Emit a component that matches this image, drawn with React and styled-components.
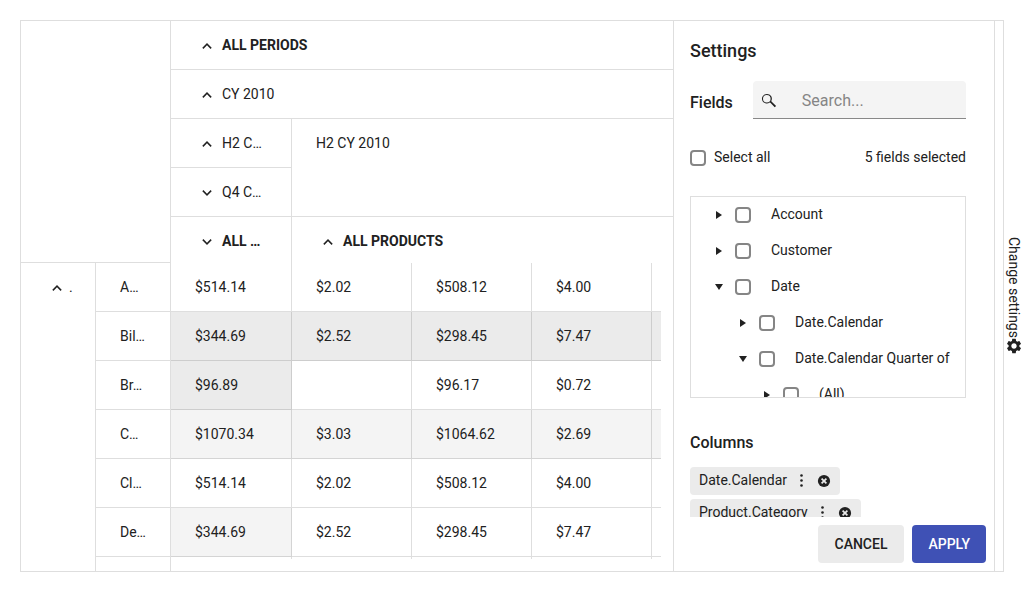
import React from "react";
import styled, { createGlobalStyle } from "styled-components";
import { MdSettings } from "react-icons/md";

const line = "rgba(33, 33, 33, 0.15)";
const ink = "#212121";

const GlobalStyle = createGlobalStyle`
  *, *::before, *::after { box-sizing: border-box; }
  body {
    margin: 0;
    overflow: hidden;
    background: #fff;
    color: ${ink};
    font: 400 14px/20px Roboto, "Liberation Sans", sans-serif;
  }
  button, input { font: inherit; color: inherit; }
`;

const Page = styled.div`
  display: flex;
  height: 100vh;
  padding: 20px 0 20px 20px;
`;

const Widget = styled.main`
  flex: 1;
  min-width: 0;
  display: flex;
  padding-right: 8px;
  border: 1px solid ${line};
`;

/* Pivot grid */

const Pivot = styled.section`
  flex: 1;
  min-width: 0;
  display: grid;
  grid-template-columns: 150px minmax(0, 1fr);
  grid-template-rows: 242px minmax(0, 1fr);
`;

const Corner = styled.div`
  border-right: 1px solid ${line};
  border-bottom: 1px solid ${line};
`;

const Pane = styled.div`
  overflow: hidden;
  margin: ${(p) => (p.$track ? "0 12px 12px 0" : "0")};
`;

const Table = styled.table`
  table-layout: fixed;
  width: ${(p) => p.$width}px;
  border-spacing: 0;
`;

const cell = `
  height: 49px;
  padding: 14px 24px;
  border-right: 1px solid ${line};
  border-bottom: 1px solid ${line};
  text-align: left;
  vertical-align: top;
  white-space: nowrap;
  overflow: hidden;
`;

const tints = { none: "transparent", light: "#f4f4f4", dark: "#ebebeb" };

const HeadCell = styled.th`
  ${cell}
  font-weight: ${(p) => (p.$total ? 700 : 400)};
`;

const DataCell = styled.td`
  ${cell}
  background: ${(p) => tints[p.$tint || "none"]};
`;

const Caption = styled.span`
  display: flex;
  align-items: center;
  gap: ${(p) => (p.$tight ? 0 : 3)}px;
`;

const IconButton = styled.button`
  flex: none;
  display: flex;
  align-items: center;
  justify-content: center;
  width: ${(p) => p.$size}px;
  height: ${(p) => (p.$size > 20 ? 20 : p.$size)}px;
  padding: 0;
  border: 0;
  background: none;
`;

const Icon = styled.svg.attrs({ viewBox: "0 0 16 16", "aria-hidden": true })`
  display: block;
  flex: none;
  width: 16px;
  height: 16px;
  fill: currentColor;
`;

/* Settings panel */

const Settings = styled.aside`
  flex: none;
  display: flex;
  flex-direction: column;
  width: 322px;
  border: solid ${line};
  border-width: 0 1px;
`;

const SettingsBody = styled.div`
  flex: 1;
  min-height: 0;
  overflow: hidden;
  padding: 16px 28px 0 16px;
`;

const Title = styled.h2`
  margin: 0;
  font-size: 18px;
  font-weight: 500;
  line-height: 28px;
`;

const Heading = styled.h3`
  margin: 0;
  font-size: 16px;
  font-weight: 500;
  line-height: 24px;
`;

const SearchRow = styled.div`
  display: flex;
  align-items: flex-end;
  gap: 20px;
  margin-top: 16px;
  ${Heading} { padding-bottom: 4px; }
`;

const SearchBox = styled.label`
  flex: 1;
  min-width: 0;
  display: flex;
  align-items: center;
  gap: 24px;
  height: 38px;
  padding: 2px 8px 0;
  border-bottom: 1px solid #888;
  border-radius: 4px 4px 0 0;
  background: #f4f4f4;
`;

const SearchInput = styled.input`
  flex: 1;
  min-width: 0;
  padding: 0 1px;
  border: 0;
  outline: 0;
  background: none;
  font-size: 16px;
  line-height: 24px;
  &::placeholder { color: #858585; opacity: 1; }
`;

const SelectRow = styled.div`
  display: flex;
  align-items: center;
  justify-content: space-between;
  margin-top: 28px;
`;

const CheckLabel = styled.label`
  display: flex;
  align-items: center;
  gap: ${(p) => p.$gap}px;
`;

const Checkbox = styled.input.attrs({ type: "checkbox" })`
  appearance: none;
  flex: none;
  width: 16px;
  height: 16px;
  margin: 2px 0 0;
  border: 2px solid #858585;
  border-radius: 4px;
  background: #fff;
`;

const Tree = styled.ul`
  height: 202px;
  margin: 29px 0 0;
  padding: 0 0 0 20px;
  overflow: hidden;
  border: 1px solid ${line};
  list-style: none;
`;

const TreeItem = styled.li`
  display: flex;
  align-items: center;
  gap: 8px;
  height: 36px;
  padding-left: ${(p) => p.$level * 24}px;
  white-space: nowrap;
  ${CheckLabel} { padding-bottom: 2px; }
`;

const ColumnsSection = styled.section`
  display: flex;
  flex-direction: column;
  align-items: flex-start;
  gap: 4px;
  margin-top: 33px;
  ${Heading} { margin-bottom: 8px; }
`;

const Chip = styled.div`
  display: flex;
  align-items: center;
  height: 28px;
  padding: 0 8px;
  border-radius: 4px;
  background: #ebebeb;
`;

const ChipText = styled.span`
  padding: 0 6px 2px 1px;
`;

const ChipActions = styled.span`
  display: flex;
  gap: 7px;
`;

const Footer = styled.footer`
  display: flex;
  justify-content: flex-end;
  gap: 8px;
  padding: 8px;
`;

const Action = styled.button`
  height: 38px;
  padding: 0 ${(p) => (p.$primary ? 16 : 17)}px;
  border: 0;
  border-radius: 4px;
  background: ${(p) => (p.$primary ? "#3f51b5" : "#ebebeb")};
  color: ${(p) => (p.$primary ? "#fff" : ink)};
  font-weight: 500;
  text-transform: uppercase;
`;

const SideTab = styled.button`
  flex: none;
  display: flex;
  align-items: center;
  justify-content: center;
  width: 20px;
  padding: 0;
  border: 0;
  background: none;
  line-height: 18px;
  writing-mode: vertical-rl;
  white-space: nowrap;
`;

const Toggle = ({ open }) => (
  <IconButton $size={24} type="button" aria-label={open ? "Collapse" : "Expand"}>
    <Icon>
      <path
        d={
          open
            ? "M8 6 3.300 10.700l1.100 1.200L8 8.300l3.600 3.600 1.100-1.200z"
            : "M8 12 3.300 7.300l1.100-1.200L8 9.700l3.600-3.600 1.100 1.200z"
        }
      />
    </Icon>
  </IconButton>
);

const Header = ({ open, tight, children, ...rest }) => (
  <HeadCell {...rest}>
    <Caption $tight={tight}>
      <Toggle open={open} />
      {children}
    </Caption>
  </HeadCell>
);

const rows = [
  { name: "A…", values: ["$514.14", "$2.02", "$508.12", "$4.00"], tints: [] },
  {
    name: "Bil…",
    values: ["$344.69", "$2.52", "$298.45", "$7.47"],
    tints: ["dark", "dark", "dark", "dark", "dark"],
  },
  { name: "Br…", values: ["$96.89", "", "$96.17", "$0.72"], tints: ["dark"] },
  {
    name: "C…",
    values: ["$1070.34", "$3.03", "$1064.62", "$2.69"],
    tints: ["light", "light", "light", "light", "light"],
  },
  { name: "Cl…", values: ["$514.14", "$2.02", "$508.12", "$4.00"], tints: [] },
  { name: "De…", values: ["$344.69", "$2.52", "$298.45", "$7.47"], tints: ["light"] },
  { name: "", values: ["", "", "", ""], tints: [] },
];

const fields = [
  { name: "Account", level: 0 },
  { name: "Customer", level: 0 },
  { name: "Date", level: 0, open: true },
  { name: "Date.Calendar", level: 1 },
  { name: "Date.Calendar Quarter of", level: 1, open: true },
  { name: "(All)", level: 2 },
];

const ValueColumns = () => (
  <colgroup>
    <col width="121" />
    <col span="4" width="120" />
  </colgroup>
);

function PivotGrid() {
  return (
    <Pivot>
      <Corner />
      <Pane>
        <Table $width={601}>
          <ValueColumns />
          <thead>
            <tr>
              <Header colSpan={5} $total open>ALL PERIODS</Header>
            </tr>
            <tr>
              <Header colSpan={5} open>CY 2010</Header>
            </tr>
            <tr>
              <Header open>H2 C…</Header>
              <HeadCell colSpan={4} rowSpan={2}>H2 CY 2010</HeadCell>
            </tr>
            <tr>
              <Header>Q4 C…</Header>
            </tr>
            <tr>
              <Header $total>ALL …</Header>
              <Header colSpan={4} $total open>ALL PRODUCTS</Header>
            </tr>
          </thead>
        </Table>
      </Pane>
      <Pane>
        <Table $width={150}>
          <tbody>
            {rows.map((row, i) => (
              <tr key={i}>
                {i === 0 && (
                  <Header scope="rowgroup" rowSpan={rows.length} open tight>.</Header>
                )}
                <HeadCell scope="row">{row.name}</HeadCell>
              </tr>
            ))}
          </tbody>
        </Table>
      </Pane>
      <Pane $track>
        <Table $width={601}>
          <ValueColumns />
          <tbody>
            {rows.map((row, i) => (
              <tr key={i}>
                {[0, 1, 2, 3, 4].map((c) => (
                  <DataCell key={c} $tint={row.tints[c]}>{row.values[c]}</DataCell>
                ))}
              </tr>
            ))}
          </tbody>
        </Table>
      </Pane>
    </Pivot>
  );
}

function SettingsPanel() {
  return (
    <Settings>
      <SettingsBody>
        <Title>Settings</Title>
        <SearchRow>
          <Heading>Fields</Heading>
          <SearchBox>
            <Icon>
              <path
                fillRule="evenodd"
                d="M5.800.9a4.800 4.800 0 1 0 2.900 8.600l.7.200 4.300 4.600 1.400-1.400-4.600-4.300-.2-.7A4.800 4.800 0 0 0 5.800.9zm0 1a3.800 3.800 0 1 1 0 7.600 3.800 3.800 0 0 1 0-7.600z"
              />
            </Icon>
            <SearchInput type="text" placeholder="Search..." aria-label="Search fields" />
          </SearchBox>
        </SearchRow>
        <SelectRow>
          <CheckLabel $gap={8}>
            <Checkbox />
            Select all
          </CheckLabel>
          <span>5 fields selected</span>
        </SelectRow>
        <Tree>
          {fields.map((field) => (
            <TreeItem key={field.name} $level={field.level}>
              <IconButton $size={16} type="button" aria-label={field.open ? "Collapse" : "Expand"}>
                <Icon>
                  <path d={field.open ? "M4 5h8l-4 6z" : "M5 4v8l6-4z"} />
                </Icon>
              </IconButton>
              <CheckLabel $gap={20}>
                <Checkbox />
                {field.name}
              </CheckLabel>
            </TreeItem>
          ))}
        </Tree>
        <ColumnsSection>
          <Heading>Columns</Heading>
          {["Date.Calendar", "Product.Category"].map((name) => (
            <Chip key={name}>
              <ChipText>{name}</ChipText>
              <ChipActions>
                <IconButton $size={16} type="button" aria-label="Options">
                  <Icon>
                    <circle cx="8.500" cy="2.500" r="1.300" />
                    <circle cx="8.500" cy="7.500" r="1.300" />
                    <circle cx="8.500" cy="12.500" r="1.300" />
                  </Icon>
                </IconButton>
                <IconButton $size={16} type="button" aria-label="Remove">
                  <Icon>
                    <circle cx="8" cy="8" r="6.100" />
                    <path d="m5.600 5.600 4.800 4.800m0-4.800-4.800 4.800" fill="none" stroke="#ebebeb" strokeWidth="1.700" />
                  </Icon>
                </IconButton>
              </ChipActions>
            </Chip>
          ))}
        </ColumnsSection>
      </SettingsBody>
      <Footer>
        <Action type="button">Cancel</Action>
        <Action type="button" $primary>Apply</Action>
      </Footer>
    </Settings>
  );
}

export default function App() {
  return (
    <>
      <GlobalStyle />
      <Page>
        <Widget>
          <PivotGrid />
          <SettingsPanel />
        </Widget>
        <SideTab type="button">
          Change settings
          <MdSettings size={18} aria-hidden />
        </SideTab>
      </Page>
    </>
  );
}
